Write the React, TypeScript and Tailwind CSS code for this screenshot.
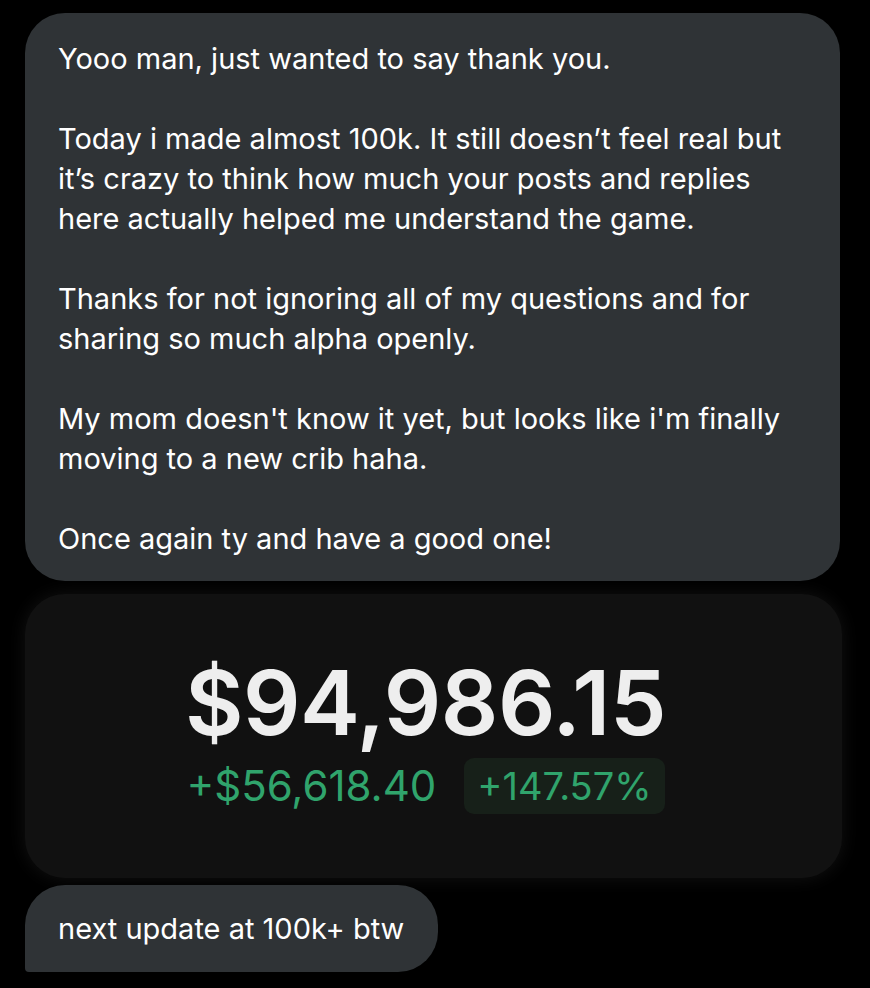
export default function App() {
  const paragraphs = [
    ['Yooo man, just wanted to say thank you.'],
    [
      'Today i made almost 100k. It still doesn\u2019t feel real but',
      'it\u2019s crazy to think how much your posts and replies',
      'here actually helped me understand the game.',
    ],
    ['Thanks for not ignoring all of my questions and for', 'sharing so much alpha openly.'],
    ["My mom doesn't know it yet, but looks like i'm finally", 'moving to a new crib haha.'],
    ['Once again ty and have a good one!'],
  ];

  return (
    <div
      className="min-h-[988px] w-[870px] bg-black px-[25px] pt-[13px] text-white"
      style={{ fontFamily: 'Inter, "Noto Sans", sans-serif' }}
    >
      {/* Message bubble */}
      <div className="w-[815px] rounded-[40px] bg-[#2f3336] pl-[33px] pr-6 pt-[26px] pb-[22px] text-[29px] leading-[40px] whitespace-nowrap">
        {paragraphs.map((lines, i) => (
          <div key={i} className={i > 0 ? 'mt-[40px]' : ''}>
            {lines.map((line) => (
              <div key={line}>{line}</div>
            ))}
          </div>
        ))}
      </div>

      {/* Portfolio card */}
      <div className="mt-[13px] flex h-[284px] w-[817px] flex-col items-center justify-center rounded-[40px] bg-[#111111] pr-[16px] shadow-[0_0_18px_rgba(255,255,255,0.07)]">
        <div className="text-[90px] font-semibold leading-none tracking-[-0.5px] text-[#eeeeee]">$94,986.15</div>
        <div className="mt-[10px] flex items-center gap-[28px]">
          <span className="text-[42px] leading-none text-[#30a46c]">+$56,618.40</span>
          <span className="rounded-[10px] bg-[#172019] px-[13px] py-[9px] text-[38px] leading-none text-[#30a46c]">
            +147.57%
          </span>
        </div>
      </div>

      {/* Follow-up bubble */}
      <div className="mt-[7px] inline-flex h-[87px] items-center rounded-[40px] rounded-bl-[4px] bg-[#2f3336] pl-[33px] pr-[34px] text-[29px]">
        next update at 100k+ btw
      </div>
    </div>
  );
}
